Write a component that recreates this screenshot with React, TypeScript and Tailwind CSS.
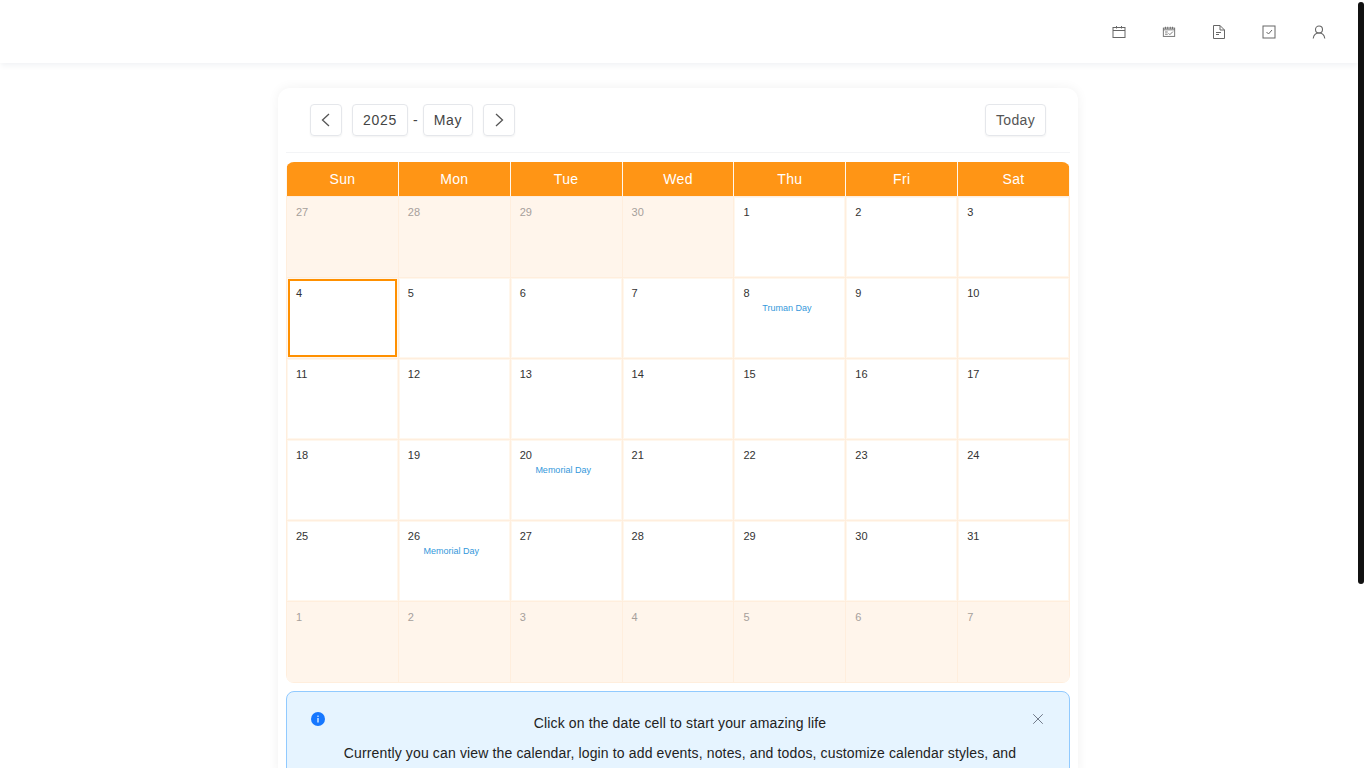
import { FC } from 'react'
import { X } from 'lucide-react'

const WeekDays = ['Sun', 'Mon', 'Tue', 'Wed', 'Thu', 'Fri', 'Sat']

interface IDay {
  day: number
  muted?: boolean
  selected?: boolean
  event?: string
}

const prev = [27, 28, 29, 30].map((day) => ({ day, muted: true }))
const may = Array.from({ length: 31 }, (_, i) => i + 1).map((day): IDay => {
  if (day === 4) return { day, selected: true }
  if (day === 8) return { day, event: 'Truman Day' }
  if (day === 20 || day === 26) return { day, event: 'Memorial Day' }
  return { day }
})
const next = [1, 2, 3, 4, 5, 6, 7].map((day) => ({ day, muted: true }))
const Days: IDay[] = [...prev, ...may, ...next]

const CalendarIcon = () => (
  <svg width="14" height="14" viewBox="0 0 14 14" fill="none" stroke="#666" strokeWidth="1">
    <rect x="1" y="2.500" width="12" height="10" />
    <path d="M1 5.500h12M4.500 1v2.500M9.500 1v2.500" />
  </svg>
)

const PlanIcon = () => (
  <svg width="16" height="14" viewBox="0 0 16 14" fill="none" stroke="#666" strokeWidth="1">
    <rect x="1.500" y="2.500" width="13" height="9.500" />
    <path d="M1.500 4.500h13M4 1v2.500M6.500 1v2.500M9.500 1v2.500M12 1v2.500M3.500 7h3M3.500 9.500h3M7.500 8.500l1.500 1.500 3.500-3.500" />
  </svg>
)

const NoteIcon = () => (
  <svg width="14" height="16" viewBox="0 0 14 16" fill="none" stroke="#666" strokeWidth="1">
    <path d="M1.500 1.500h6.500l4.500 4.500v8.500h-11zM8 1.500v4.500h4.500M4 8.500h5M4 10.500h3" />
  </svg>
)

const TodoIcon = () => (
  <svg width="14" height="14" viewBox="0 0 14 14" fill="none" stroke="#666" strokeWidth="1">
    <rect x="1" y="1" width="12" height="12" />
    <path d="M4.500 7l2 2 3.500-4" />
  </svg>
)

const UserIcon = () => (
  <svg width="14" height="14" viewBox="0 0 14 14" fill="none" stroke="#666" strokeWidth="1.100">
    <circle cx="7" cy="4.500" r="3.500" />
    <path d="M1.200 13.500c.5-3.400 2.800-5.500 5.800-5.500s5.300 2.100 5.800 5.500" />
  </svg>
)

const InfoIcon = () => (
  <svg width="14" height="14" viewBox="0 0 14 14" className="shrink-0">
    <circle cx="7" cy="7" r="7" fill="#1677ff" />
    <rect x="6.400" y="6" width="1.200" height="4.500" fill="#fff" />
    <rect x="6.400" y="3.600" width="1.200" height="1.300" fill="#fff" />
  </svg>
)

const ArrowLeft = () => (
  <svg width="16" height="16" viewBox="0 0 16 16" fill="none" stroke="#555" strokeWidth="1.300">
    <path d="M11 2L4.500 8l6.500 6" />
  </svg>
)

const ArrowRight = () => (
  <svg width="16" height="16" viewBox="0 0 16 16" fill="none" stroke="#555" strokeWidth="1.300">
    <path d="M5 2l6.500 6L5 14" />
  </svg>
)

const App: FC = () => {
  return (
    <div
      className="relative h-screen overflow-hidden bg-white text-[#222]"
      style={{ fontFamily: '"Liberation Sans", Arial, sans-serif' }}
    >
      <header className="mr-2 flex h-15.75 items-center justify-end gap-9 bg-white pr-8 pt-px shadow-md shadow-gray-100">
        <span className="flex w-3.5 justify-center"><CalendarIcon /></span>
        <span className="flex w-3.5 justify-center"><PlanIcon /></span>
        <span className="flex w-3.5 justify-center"><NoteIcon /></span>
        <span className="flex w-3.5 justify-center"><TodoIcon /></span>
        <span className="flex w-3.5 justify-center"><UserIcon /></span>
      </header>

      <main className="mr-2.5 flex justify-center pt-6.25">
        <div className="w-[800px] rounded-xl bg-white px-2 shadow-[0_0_12px_rgba(0,0,0,0.06)]">
          <div className="flex items-center justify-between border-b border-gray-100 px-6 py-4">
            <div className="flex items-center text-[#444]">
              <button className="flex h-8 w-8 items-center justify-center rounded border border-gray-200 shadow-xs">
                <ArrowLeft />
              </button>
              <span className="ml-2.5 flex h-8 items-center rounded border border-gray-200 px-2.5 text-sm tracking-wider shadow-xs">
                2025
              </span>
              <span className="mx-1.25 text-sm">-</span>
              <span className="flex h-8 items-center rounded border border-gray-200 px-2.5 text-sm tracking-wider shadow-xs">
                May
              </span>
              <button className="ml-2.5 flex h-8 w-8 items-center justify-center rounded border border-gray-200 shadow-xs">
                <ArrowRight />
              </button>
            </div>
            <button className="flex h-8 items-center rounded border border-gray-200 px-2.5 text-sm tracking-wide text-[#555] shadow-xs">
              Today
            </button>
          </div>

          <div className="mt-2.25 overflow-hidden rounded-lg">
            <div className="grid h-8.5 grid-cols-7 gap-px bg-orange-50 px-px">
              {WeekDays.map((name) => (
                <div
                  key={name}
                  className="flex items-center justify-center bg-[#ff9515] text-sm tracking-wide text-white"
                >
                  {name}
                </div>
              ))}
            </div>
            <div className="grid grid-cols-7 gap-px bg-[#ffeedd] p-px">
              {Days.map((item, index) => (
                <div
                  key={index}
                  className={`h-20 border px-2 py-1.5 text-[11px] leading-4 ${
                    item.muted
                      ? 'border-[#fff5eb] bg-[#fff5eb] text-stone-400'
                      : 'border-orange-50 bg-white text-[#333]'
                  } ${item.selected ? 'outline-2 -outline-offset-3 outline-[#ff9000]' : ''}`}
                >
                  {item.day}
                  {item.event && (
                    <p className="mt-px pr-1.5 text-center text-[9px] leading-3 text-[#3498db]">{item.event}</p>
                  )}
                </div>
              ))}
            </div>
          </div>

          <div className="mt-2 rounded-lg border border-[#91caff] bg-[#e6f4ff] py-5 pl-6 pr-6 text-sm text-[#222]">
            <div className="flex items-start">
              <InfoIcon />
              <div className="ml-1.5 flex-1 text-center tracking-[0.01em]">
                <p className="mt-px">Click on the date cell to start your amazing life</p>
                <p className="mt-2.5">
                  Currently you can view the calendar, login to add events, notes, and todos, customize calendar styles, and
                </p>
              </div>
              <X size={18} strokeWidth={1.25} className="-mr-0.5 -mt-0.5 shrink-0 text-gray-500" />
            </div>
          </div>
        </div>
      </main>

      <div className="absolute right-0.5 top-0.5 h-[582px] w-1.5 rounded-full bg-[#111]" />
    </div>
  )
}

export default App
